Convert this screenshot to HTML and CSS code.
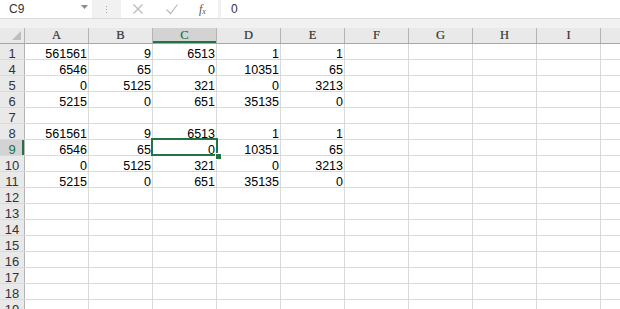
FILE: index.html
```html
<!DOCTYPE html>
<html lang="en">
<head>
    <meta charset="utf-8">
    <title>Book1 - Sheet1</title>
    <link rel="stylesheet" href="styles.css">
</head>
<body>
    <div id="formula-bar">
        <div class="name-box">
            <span>C9</span>
            <svg class="caret" width="7" height="4" viewBox="0 0 7 4"><path d="M0 0h7L3.5 4z" fill="#8a8a8a"/></svg>
        </div>
        <div class="grip"><i></i><i></i><i></i></div>
        <div class="fx-buttons">
            <svg width="12" height="12" viewBox="0 0 12 12"><path d="M1.5 1.5l9 9M10.5 1.5l-9 9" stroke="#b9b9b9" stroke-width="1.2" fill="none"/></svg>
            <svg width="14" height="12" viewBox="0 0 14 12"><path d="M1.5 6.5l4 4L12.5 1.5" stroke="#b9b9b9" stroke-width="1.2" fill="none"/></svg>
            <span class="fx">f<sub>x</sub></span>
        </div>
        <div class="formula-input">0</div>
    </div>
    <div class="band"></div>

    <div id="sheet">
        <div class="row head">
            <div class="corner"><svg width="9" height="9" viewBox="0 0 9 9"><path d="M9 0V9H0z" fill="#bdbdbd"/></svg></div>
            <div class="col">A</div>
            <div class="col">B</div>
            <div class="col selected">C</div>
            <div class="col">D</div>
            <div class="col">E</div>
            <div class="col">F</div>
            <div class="col">G</div>
            <div class="col">H</div>
            <div class="col">I</div>
            <div class="col"></div>
        </div>
        <div class="row"><div class="rh">1</div><div class="c">561561</div><div class="c">9</div><div class="c">6513</div><div class="c">1</div><div class="c">1</div></div>
        <div class="row"><div class="rh">4</div><div class="c">6546</div><div class="c">65</div><div class="c">0</div><div class="c">10351</div><div class="c">65</div></div>
        <div class="row"><div class="rh">5</div><div class="c">0</div><div class="c">5125</div><div class="c">321</div><div class="c">0</div><div class="c">3213</div></div>
        <div class="row"><div class="rh">6</div><div class="c">5215</div><div class="c">0</div><div class="c">651</div><div class="c">35135</div><div class="c">0</div></div>
        <div class="row"><div class="rh">7</div></div>
        <div class="row"><div class="rh">8</div><div class="c">561561</div><div class="c">9</div><div class="c">6513</div><div class="c">1</div><div class="c">1</div></div>
        <div class="row"><div class="rh selected">9</div><div class="c">6546</div><div class="c">65</div><div class="c active">0</div><div class="c">10351</div><div class="c">65</div></div>
        <div class="row"><div class="rh">10</div><div class="c">0</div><div class="c">5125</div><div class="c">321</div><div class="c">0</div><div class="c">3213</div></div>
        <div class="row"><div class="rh">11</div><div class="c">5215</div><div class="c">0</div><div class="c">651</div><div class="c">35135</div><div class="c">0</div></div>
        <div class="row"><div class="rh">12</div></div>
        <div class="row"><div class="rh">13</div></div>
        <div class="row"><div class="rh">14</div></div>
        <div class="row"><div class="rh">15</div></div>
        <div class="row"><div class="rh">16</div></div>
        <div class="row"><div class="rh">17</div></div>
        <div class="row"><div class="rh">18</div></div>
        <div class="row"><div class="rh">19</div></div>
    </div>
</body>
</html>
```

FILE: styles.css
```css
:root {
    --grid: #d9d9d9;
    --head-bg: #e9e9e9;
    --head-line: #b4b4b4;
    --green: #217346;
}

html {
    color: #000;
    font-family: "Liberation Sans", Arial, sans-serif;
}

body {
    margin: 0;
    width: 620px;
    height: 309px;
    overflow: hidden;
    background: white;
}

/* --- Formula bar --- */

#formula-bar {
    display: flex;
    height: 18px;
    background: #f1f1f1;
}

.name-box {
    display: flex;
    align-items: center;
    justify-content: space-between;
    box-sizing: border-box;
    width: 92px;
    padding: 0 4px 0 9px;
    background: white;
    font-size: 12px;
    color: #333;
}

.caret {
    margin-top: -4px;
}

.grip {
    display: flex;
    flex-direction: column;
    justify-content: center;
    gap: 2px;
    width: 29px;
    align-items: center;
}

.grip i {
    display: block;
    width: 1px;
    height: 1px;
    background: #a8a8a8;
}

.fx-buttons {
    display: flex;
    align-items: center;
    width: 97px;
    margin-right: 3px;
    padding-left: 11px;
    box-sizing: border-box;
    gap: 19px;
    background: white;
}

.fx-buttons svg + svg {
    margin-left: 2px;
}

.fx {
    margin-left: 1px;
    font-family: "Liberation Serif", serif;
    font-style: italic;
    font-size: 12px;
    color: #555;
}

.fx sub {
    font-size: 8px;
    vertical-align: -1px;
}

.formula-input {
    flex: 1;
    padding-left: 10px;
    background: white;
    font-size: 12px;
    line-height: 18px;
    color: #333;
}

.band {
    height: 9px;
    border-top: 1px solid #dcdcdc;
    background: #f1f1f1;
}

/* --- Sheet grid --- */

.row {
    display: grid;
    grid-template-columns: 25px repeat(9, 64px) 1fr;
    box-sizing: border-box;
    height: 16px;
    border-bottom: 1px solid var(--grid);
    background-image: repeating-linear-gradient(90deg, transparent 0 63px, var(--grid) 63px 64px);
    background-position: 25px 0;
}

.row.head {
    background: var(--head-bg);
    border-bottom-color: #a6a6a6;
}

.corner {
    display: flex;
    justify-content: flex-end;
    align-items: flex-end;
    padding: 0 3px 3px 0;
    border-right: 1px solid var(--head-line);
}

.col {
    border-right: 1px solid var(--head-line);
    font-family: "Liberation Serif", serif;
    font-size: 12.5px;
    line-height: 15px;
    text-align: center;
    color: #333;
    -webkit-text-stroke: 0.2px #333;
}

.col:last-child {
    border-right: 0;
}

.col.selected {
    background: #d3d3d3;
    color: var(--green);
    -webkit-text-stroke-color: var(--green);
    box-shadow: inset 0 -2px var(--green);
}

.rh {
    background: var(--head-bg);
    border-right: 1px solid var(--head-line);
    font-size: 13px;
    line-height: 10px;
    padding-top: 5px;
    text-align: center;
    color: #333;
}

.rh.selected {
    background: #d3d3d3;
    color: var(--green);
    box-shadow: inset -2px 0 var(--green);
}

.c {
    padding: 5px 2px 0 0;
    font-size: 12.5px;
    line-height: 10px;
    text-align: right;
}

/* Active cell frame and fill handle sit over the neighbouring gridlines. */
.c.active {
    position: relative;
}

.c.active::before {
    content: "";
    position: absolute;
    top: -2px;
    left: -2px;
    right: -1px;
    bottom: -1px;
    border: 2px solid var(--green);
}

.c.active::after {
    content: "";
    position: absolute;
    right: -4px;
    bottom: -4px;
    width: 5px;
    height: 5px;
    background: var(--green);
    outline: 1px solid white;
    z-index: 1;
}
```
